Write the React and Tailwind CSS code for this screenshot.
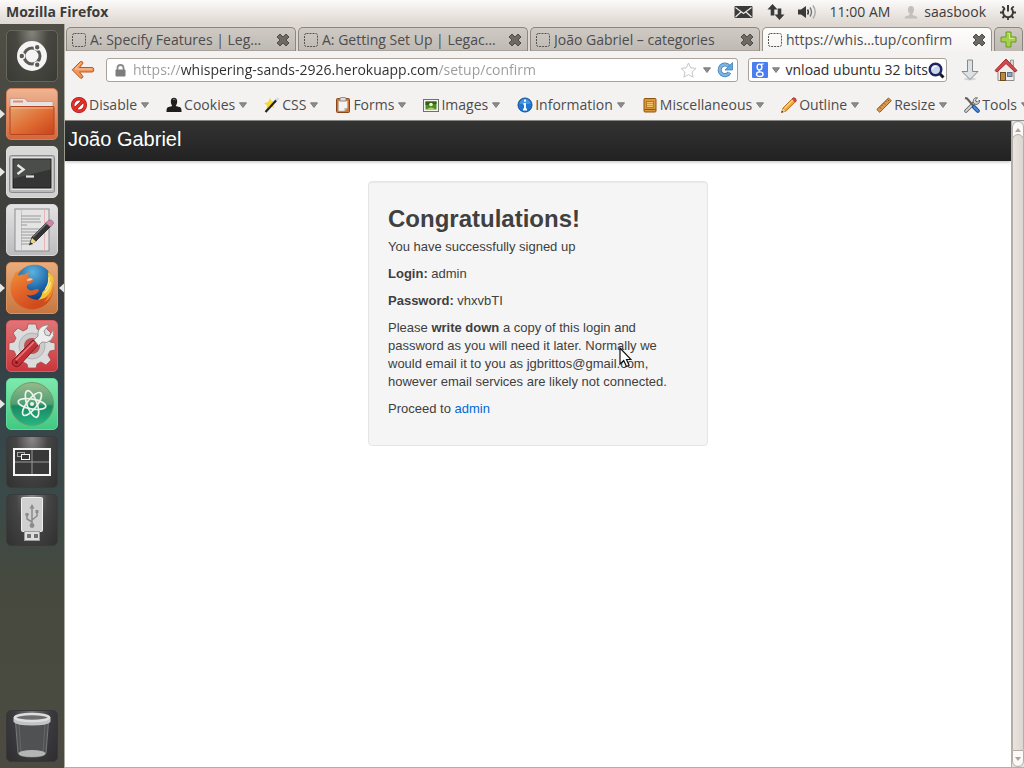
import React from "react";

const UI = "font-['Open_Sans','Noto_Sans',sans-serif]";

/* ---------- top panel ---------- */

function TopPanel() {
  return (
    <header className="flex h-6 shrink-0 items-center justify-between bg-linear-to-b from-[#fbfaf9] to-[#dfd8d2] pr-2 pl-[6px] text-[14px] leading-5 text-[#3c3c3c]">
      <h1 className="font-bold">Mozilla Firefox</h1>
      <div className="flex items-center">
        <button aria-label="Messages" className="mr-[14px]">
          <svg width="19" height="14" viewBox="0 0 19 14">
            <rect x="0.5" y="1" width="18" height="12" rx="1" fill="#3a3a3a" />
            <path d="M1.5 2.5 9.5 8.5 17.500 2.500M1.500 12 7 7M17.500 12 12 7" fill="none" stroke="#eeebe8" strokeWidth="1.200" />
          </svg>
        </button>
        <button aria-label="Network" className="mr-3">
          <svg width="18" height="16" viewBox="0 0 18 16" fill="#3a3a3a">
            <path d="M5.500 0 10.500 5.500H7.300v6H3.700v-6H.5z" />
            <path d="M12.500 16 7.500 10.500h3.200V4.500h3.600v6h3.200z" />
          </svg>
        </button>
        <button aria-label="Volume" className="mr-3">
          <svg width="21" height="16" viewBox="0 0 21 16" fill="none">
            <path d="M1 5.500h3L9 2v12L4 10.500H1z" fill="#3a3a3a" />
            <path d="M10.500 5.500q1.800 2.500 0 5" stroke="#3a3a3a" strokeWidth="1.500" />
            <path d="M13 3.500q3 4.500 0 9" stroke="#777" strokeWidth="1.400" />
            <path d="M16 1.500q4.500 6.500 0 13" stroke="#aaa" strokeWidth="1.400" />
          </svg>
        </button>
        <time className="mr-[14px]">11:00 AM</time>
        <button className="mr-[14px] flex items-center gap-[6px]">
          <svg width="14" height="14" viewBox="0 0 14 14" fill="#c4bfba">
            <path d="M4 4.500a3 3.500 0 0 1 6 0c0 2-.6 3.200-1.500 3.900V10l4 1.500q.8.4.8 1.500v.5H.7V13q0-1.100.8-1.500l4-1.500V8.400C4.600 7.700 4 6.500 4 4.500z" />
          </svg>
          saasbook
        </button>
        <button aria-label="Session">
          <svg width="16" height="16" viewBox="0 0 16 16" fill="none" stroke="#3a3a3a">
            <path d="M5 4.200a5 5 0 1 0 6 0" strokeWidth="2" />
            <path d="M8 1v6.500" strokeWidth="2" />
            <path d="M2.300 2.300 4.300 4.300M13.700 2.300 11.700 4.300M0 8.500H3M16 8.500H13M2.500 14 4.500 12M13.500 14 11.500 12M8 13v3" strokeWidth="1.800" />
          </svg>
        </button>
      </div>
    </header>
  );
}

/* ---------- launcher ---------- */

const DarkTile = "bg-[radial-gradient(ellipse_at_top,#8a8a8a_0%,#454545_45%,#303030_100%)] border-[#3a3b3b]";

const launchers = [
  {
    name: "Dash home",
    tile: "bg-[radial-gradient(ellipse_at_top,#85857c_0%,#484841_45%,#3a3a35_100%)] border-[#66665e]",
    art: (
      <>
        <circle cx="26" cy="26" r="15" fill="#f4f4f4" />
        <circle cx="26" cy="26" r="8" fill="none" stroke="#5b5a53" strokeWidth="3" />
        <g stroke="#f4f4f4" strokeWidth="1.400" fill="#5b5a53">
          <circle cx="15.800" cy="26" r="2.900" />
          <circle cx="31.200" cy="17.200" r="2.900" />
          <circle cx="31.200" cy="34.800" r="2.900" />
        </g>
      </>
    ),
  },
  {
    name: "Home folder",
    running: true,
    tile: "bg-linear-to-b from-[#efb493] to-[#d5673a] border-[#d77f55]",
    art: (
      <>
        <defs>
          <linearGradient id="folder" x1="0" y1="0" x2="1" y2="1">
            <stop offset="0" stopColor="#e0a56e" />
            <stop offset="0.500" stopColor="#e06f35" />
            <stop offset="1" stopColor="#c9431b" />
          </linearGradient>
        </defs>
        <path d="M4 10.500h14q2 0 3 3h26v12H4z" fill="#e4e4e4" stroke="#b98e78" strokeWidth="0.700" />
        <path d="M7 13.500h10" stroke="#e08d64" strokeWidth="2" />
        <rect x="4" y="18.500" width="44" height="28" rx="1" fill="url(#folder)" stroke="#b5451f" />
        <path d="M5 20h42" stroke="#f0b58f" />
      </>
    ),
  },
  {
    name: "Terminal",
    running: true,
    tile: "bg-linear-to-b from-[#d9d9d9] to-[#d0d0d0] border-[#dedede]",
    art: (
      <>
        <rect x="3.500" y="9.500" width="45" height="37" rx="2" fill="#b9b9b9" stroke="#8c8c8c" />
        <rect x="5.500" y="11" width="41" height="33" fill="#e3e3e3" />
        <rect x="7" y="13" width="38" height="29" fill="#343534" stroke="#1c1c1c" />
        <path d="M7.500 13.500h37v10l-37 9z" fill="#4b4d4b" />
        <path d="m11.500 19 6 4.500-6 4.500" fill="none" stroke="#e5e5e5" strokeWidth="2.400" />
        <path d="M20 30.500h8" stroke="#e5e5e5" strokeWidth="2.200" />
      </>
    ),
  },
  {
    name: "Text editor",
    tile: "bg-linear-to-b from-[#e3e3e3] to-[#bcbcbf] border-[#d8d8d9]",
    art: (
      <>
        <rect x="9" y="5" width="34" height="42" fill="#e4e4e4" stroke="#8d8d8d" />
        <path d="M15.500 5v42M38.500 5v42" stroke="#e8a9a9" strokeWidth="0.800" />
        <path d="M15 12h20M15 15h19M15 18h20M15 21h6M15 25h20M15 28h17M15 31h19M15 34h14M15 37h16M15 40h12" stroke="#999" strokeWidth="1.100" />
        <path d="M23.500 41 26 33 41 18 45 22 30 37z" fill="#333" stroke="#1f1f1f" strokeWidth="0.800" />
        <path d="M27 33 41.500 18.500" stroke="#777" strokeWidth="1.400" />
        <path d="M23.500 41 26 34 30 37.500z" fill="#ead98a" />
        <path d="m23.500 41 1-3 2 1.800z" fill="#222" />
        <path d="M39.500 19 43 16q4-.5 4.500 3.500L44.500 23z" fill="#cd86a8" stroke="#8e5572" strokeWidth="0.600" />
      </>
    ),
  },
  {
    name: "Firefox",
    running: true,
    active: true,
    tile: "bg-linear-to-b from-[#e9ac7c] to-[#c8763e] border-[#d9935f]",
    art: (
      <>
        <defs>
          <radialGradient id="globe" cx="0.450" cy="0.200" r="0.800">
            <stop offset="0" stopColor="#5cb3de" />
            <stop offset="0.600" stopColor="#1f64a6" />
            <stop offset="1" stopColor="#0d3470" />
          </radialGradient>
          <linearGradient id="fox" x1="0" y1="0" x2="0.600" y2="1">
            <stop offset="0" stopColor="#ee9436" />
            <stop offset="0.500" stopColor="#e4672a" />
            <stop offset="1" stopColor="#cf4a1e" />
          </linearGradient>
        </defs>
        <circle cx="26" cy="26" r="21.500" fill="url(#fox)" />
        <circle cx="28.500" cy="21" r="18.300" fill="url(#globe)" />
        <path d="M42.500 9q-1 4 0 7 .5 5-2 9-2 3-4 5-1 6-6 9 6 1 10-3 6-5 7-12 1-8-2-11-2-2-3-4z" fill="#f3c437" />
        <path d="M46.500 17q1.500 9-4 15-5 6-12 8 9 2 14-5 5-8 2-18z" fill="#ec8a2c" />
        <path d="M43 15q0 8-3.500 12M44.500 20q-1 7-6 11" fill="none" stroke="#fbeb92" strokeWidth="1.400" />
        <path d="M7.500 16q0-4 3-7 0 3 2 4.500 3-1.500 6-1 2-2 5-2.500-2 3-1 5 2 2 5 2.500-1 3.500-6 5-2 3 1 5 3 2 6 0 3-1 4.500.5-1 3.500-6 5-4 1-7-.5 5 6 13 5 6-1 9-3.500-4 10-16 11Q10 45 5.500 31 4 23 7.500 16z" fill="url(#fox)" />
        <path d="M21 17.500q3-2 6-.500-2 2-6 2z" fill="#f2c9b4" />
      </>
    ),
  },
  {
    name: "System settings",
    tile: "bg-linear-to-b from-[#e07477] to-[#c9363d] border-[#dc5c61]",
    art: (
      <>
        <path d="M22 4h8l1 5 4 2 5-3 5 5-3 5 2 4 5 1v7l-5 1-2 4 3 5-5 5-5-3-4 2-1 4h-8l-1-4-4-2-5 3-5-5 3-5-2-4-5-1v-7l5-1 2-4-3-5 5-5 5 3 4-2z" fill="#dcdcdc" stroke="#a94b4e" strokeWidth="0.800" />
        <circle cx="26" cy="26" r="13" fill="#cbcbcb" stroke="#b4b4b4" />
        <circle cx="26" cy="26" r="8" fill="#bf5156" />
        <path d="M7 40 27 20l5 5L13 46q-3 2-6-1-2-2 0-5z" fill="#c52f35" stroke="#801a1f" />
        <path d="M10 40 28 22" stroke="#e97c80" strokeWidth="1.600" />
        <path d="m28 20 4-4q-1-7 5-10 3-1.500 6-1l-5 6 1.500 4 4 1 3.500-6q2 6-2 10-4 4-9 2l-3.500 3.500z" fill="#ededed" stroke="#8d8d8d" strokeWidth="0.900" />
        <circle cx="10.500" cy="42.500" r="1.300" fill="#6d1317" />
      </>
    ),
  },
  {
    name: "Atom",
    running: true,
    tile: "bg-linear-to-b from-[#7fe8ae] to-[#40c983] border-[#5ddd98]",
    art: (
      <>
        <defs>
          <linearGradient id="atom" x1="0" y1="0" x2="0" y2="1">
            <stop offset="0" stopColor="#98b98b" />
            <stop offset="0.500" stopColor="#4f9f72" />
            <stop offset="0.550" stopColor="#178a62" />
            <stop offset="1" stopColor="#27b583" />
          </linearGradient>
        </defs>
        <circle cx="26" cy="26" r="21.500" fill="url(#atom)" stroke="#6d9d62" />
        <g fill="none" stroke="#ecf2ec" strokeWidth="1.700">
          <ellipse cx="26" cy="26" rx="14" ry="5" transform="rotate(10 26 26)" />
          <ellipse cx="26" cy="26" rx="14" ry="5" transform="rotate(70 26 26)" />
          <ellipse cx="26" cy="26" rx="14" ry="5" transform="rotate(128 26 26)" />
        </g>
        <circle cx="26" cy="26" r="2" fill="#ecf2ec" />
      </>
    ),
  },
  {
    name: "Workspace switcher",
    tile: DarkTile,
    art: (
      <>
        <rect x="8" y="13" width="36" height="26" fill="#383838" stroke="#f5f5f5" strokeWidth="2" />
        <path d="M26 14v24M9 26h34" stroke="#9a9a9a" />
        <rect x="11.500" y="16.500" width="7" height="4" fill="none" stroke="#a5a5a5" />
        <rect x="15.500" y="18.500" width="8" height="5" fill="#383838" stroke="#f5f5f5" />
      </>
    ),
  },
  {
    name: "USB drive",
    tile: DarkTile,
    art: (
      <>
        <rect x="15.500" y="3.500" width="21" height="34" rx="1" fill="#d0d0d0" stroke="#efefef" />
        <rect x="18.500" y="37.500" width="15" height="9" fill="#dedede" stroke="#9c9c9c" />
        <path d="M21 40h4v4h-4zM28 40h4v4h-4z" fill="#717171" />
        <g stroke="#8b8b8b" strokeWidth="1.500" fill="none">
          <path d="M26 14v18M26 28l-5-3v-4M26 26l5-4v-4" />
        </g>
        <path d="m26 10 2.500 4.500h-5zM29.500 16h3v3h-3z" fill="#8b8b8b" />
        <circle cx="21" cy="20.500" r="1.800" fill="#8b8b8b" />
        <circle cx="26" cy="31.500" r="2.400" fill="#8b8b8b" />
      </>
    ),
  },
];

const trash = {
  name: "Trash",
  tile: "bg-[radial-gradient(ellipse_at_top,#77777a_0%,#3c3c40_50%,#2e2e31_100%)] border-[#38383a]",
  art: (
    <>
      <path d="M9.500 12 12 43q1 4 14 4t14-4l2.500-31z" fill="#505152" stroke="#858585" strokeWidth="0.800" />
      <path d="M13 15 15 42M39 15 37 42" stroke="#666" />
      <ellipse cx="26" cy="43.500" rx="13.500" ry="3.500" fill="#b4b6b4" />
      <path d="M7.500 7v5q3 3.500 18.500 3.500T44.500 12V7z" fill="#c2c3c2" />
      <ellipse cx="26" cy="7.500" rx="17" ry="3.500" fill="#6d6d6d" stroke="#dedede" strokeWidth="2.600" />
    </>
  ),
};

function LauncherItem({ item }) {
  return (
    <div className="relative flex w-full justify-center">
      {item.running && (
        <svg className="absolute top-[21px] left-0" width="5" height="10" viewBox="0 0 5 10">
          <path d="M0 0.500 5 5 0 9.500z" fill="#e6e6e6" />
        </svg>
      )}
      <button aria-label={item.name} className={"size-[52px] rounded-[5px] border " + item.tile}>
        <svg className="-m-px" width="52" height="52" viewBox="0 0 52 52">
          {item.art}
        </svg>
      </button>
      {item.active && (
        <svg className="absolute top-[21px] right-0" width="5" height="10" viewBox="0 0 5 10">
          <path d="M5 0.500 0 5 5 9.500z" fill="#e6e6e6" />
        </svg>
      )}
    </div>
  );
}

function Launcher() {
  return (
    <nav
      aria-label="Launcher"
      className="flex w-[65px] shrink-0 flex-col gap-[6px] border-r border-[#aaa99f] bg-[linear-gradient(#504f45_0%,#3f3f3c_25%,#3a3c3d_38%,#34444a_50%,#3b4a47_64%,#47493f_76%,#4b4b41_100%)] pt-[6px] pb-[6px]"
    >
      {launchers.map((item) => (
        <LauncherItem key={item.name} item={item} />
      ))}
      <div className="mt-auto">
        <LauncherItem item={trash} />
      </div>
    </nav>
  );
}

/* ---------- tabs ---------- */

const tabs = [
  { title: "A: Specify Features | Leg…" },
  { title: "A: Getting Set Up | Legac…" },
  { title: "João Gabriel – categories" },
  { title: "https://whis…tup/confirm", selected: true },
];

function TabStrip() {
  return (
    <div className="flex h-[27px] items-end bg-[#dfd8d2] pt-[3px] pr-px pl-px">
      <div role="tablist" className="flex h-full min-w-0 flex-1 gap-[2px]">
        {tabs.map((tab) => (
          <div
            key={tab.title}
            className={
              "flex min-w-0 flex-1 items-center rounded-t-[5px] border border-b-0 px-[5px] " +
              (tab.selected
                ? "border-[#98918a] bg-linear-to-b from-[#fdfdfc] to-[#f6f4f3]"
                : "border-[#8d867f] bg-linear-to-b from-[#d0cac4] to-[#bfb9b3] shadow-[inset_0_-1px_0_#a8a19a]")
            }
          >
            <button role="tab" aria-selected={!!tab.selected} className="flex min-w-0 flex-1 items-center gap-1">
              <svg className="shrink-0" width="14" height="14" viewBox="0 0 14 14">
                <rect x="0.500" y="0.500" width="13" height="13" rx="2" fill="none" stroke="#55524f" strokeDasharray="2 1" />
              </svg>
              <span className="truncate text-[14px] leading-5 text-[#4c4c4c]">{tab.title}</span>
            </button>
            <button aria-label="Close tab" className="ml-1 shrink-0">
              <svg width="14" height="14" viewBox="0 0 14 14">
                <path d="M4 1 7 4l3-3 3 3-3 3 3 3-3 3-3-3-3 3-3-3 3-3-3-3z" fill="#6d6a66" stroke="#4e4b48" />
              </svg>
            </button>
          </div>
        ))}
      </div>
      <button
        aria-label="New tab"
        className="ml-[2px] flex h-full w-[29px] items-center justify-center rounded-t-[5px] border border-b-0 border-[#8d867f] bg-linear-to-b from-[#d0cac4] to-[#bfb9b3]"
      >
        <svg width="17" height="17" viewBox="0 0 17 17">
          <path d="M6 1h5v5h5v5h-5v5H6v-5H1V6h5z" fill="#a5d04c" stroke="#6a9a1f" />
          <path d="M7.500 2.500h2v5h5" fill="none" stroke="#d2ec96" />
        </svg>
      </button>
    </div>
  );
}

/* ---------- navigation bar ---------- */

function Caret() {
  return (
    <svg className="shrink-0" width="8" height="6" viewBox="0 0 8 6">
      <path d="M0.500 0.800h7L4 5.500z" fill="#8f8f8f" stroke="#6b6b6b" strokeWidth="0.800" />
    </svg>
  );
}

function NavBar() {
  return (
    <div className="flex h-[38px] items-center pr-[6px] pl-[6px]">
      <button aria-label="Back" className="mr-[11px]">
        <svg width="24" height="20" viewBox="0 0 24 20">
          <path d="M9.500 1.500q2.200-.5 2.500 1.700L8.500 7.500H21q1.800 0 1.800 2.300T21 12H8.500l3.500 4.500q-.3 2.200-2.500 1.700L1.200 9.800z" fill="#f0965a" stroke="#b85a22" />
          <path d="M9.500 3.500 4 9h17" fill="none" stroke="#f9c9a3" />
        </svg>
      </button>
      <div className="flex h-6 min-w-0 flex-1 items-center rounded-[3px] border border-[#aaa29a] bg-white pr-1 pl-2">
        <svg className="mr-[7px] shrink-0" width="11" height="13" viewBox="0 0 11 13">
          <path d="M2.500 6V4a3 3 0 0 1 6 0v2" fill="none" stroke="#8a8a8a" strokeWidth="1.800" />
          <rect x="0.500" y="5.500" width="10" height="7" rx="1" fill="#7d7d7d" />
        </svg>
        <input
          aria-label="Address"
          defaultValue="https://whispering-sands-2926.herokuapp.com/setup/confirm"
          className="min-w-0 flex-1 bg-[linear-gradient(90deg,#9a9a9a_48px,#2e2e2e_48px,#2e2e2e_305px,#9a9a9a_305px)] bg-clip-text text-[14px] leading-5 text-transparent caret-black outline-none"
        />
        <button aria-label="Bookmark this page" className="mr-[6px]">
          <svg width="17" height="16" viewBox="0 0 17 16">
            <path d="m8.500 1 2.200 4.800 5.300.6-3.900 3.600 1 5.200-4.600-2.600-4.600 2.600 1-5.200L1 6.400l5.300-.6z" fill="#fdfdfd" stroke="#c6c6c6" />
          </svg>
        </button>
        <button aria-label="History" className="mr-[6px]">
          <Caret />
        </button>
        <button aria-label="Reload">
          <svg width="16" height="16" viewBox="0 0 16 16">
            <path d="M12.500 10.500A5.300 5.300 0 1 1 12 4.500" fill="none" stroke="#4383bd" strokeWidth="4" />
            <path d="M12.500 10.500A5.300 5.300 0 1 1 12 4.500" fill="none" stroke="#7fb4df" strokeWidth="2.400" />
            <path d="M15.500 0.500v7.500H8z" fill="#6ba5d6" stroke="#4383bd" strokeWidth="0.800" />
          </svg>
        </button>
      </div>
      <div className="ml-[10px] flex h-6 w-[199px] shrink-0 items-center rounded-[3px] border border-[#aaa29a] bg-white pr-px pl-[3px]">
        <button aria-label="Search engine" className="flex shrink-0 items-center gap-1">
          <svg width="16" height="16" viewBox="0 0 16 16">
            <rect width="16" height="16" rx="1" fill="#4a7df0" />
            <ellipse cx="7.500" cy="5" rx="2.400" ry="2.900" fill="none" stroke="#fff" strokeWidth="1.400" />
            <path d="M9 2.300 11.500 1.800M7.500 8q-1.300 1 .5 1.900" fill="none" stroke="#fff" strokeWidth="1.200" />
            <ellipse cx="7.800" cy="12.200" rx="3.300" ry="2.300" fill="none" stroke="#fff" strokeWidth="1.400" />
          </svg>
          <Caret />
        </button>
        <input
          aria-label="Search"
          defaultValue="vnload ubuntu 32 bits"
          className="ml-1 min-w-0 flex-1 text-right text-[14px] leading-5 text-[#2e2e2e] outline-none"
        />
        <button aria-label="Go" className="shrink-0">
          <svg width="17" height="17" viewBox="0 0 17 17">
            <path d="m11 11 4.500 4.500" stroke="#1b1b1b" strokeWidth="3" />
            <circle cx="7.500" cy="7.500" r="5.800" fill="#c9d6ee" stroke="#1f2462" strokeWidth="2.400" />
            <path d="M4.500 7a3.500 3.500 0 0 1 4-2.500" fill="none" stroke="#fff" strokeWidth="1.400" />
          </svg>
        </button>
      </div>
      <button aria-label="Downloads" className="ml-[14px]">
        <svg width="18" height="22" viewBox="0 0 18 22">
          <ellipse cx="9" cy="20" rx="6" ry="1.500" fill="#d6d4d2" />
          <path d="M6.500 1h5v11.500H17L9 20.500 1 12.500h5.500z" fill="#dde1e3" stroke="#84898c" />
        </svg>
      </button>
      <button aria-label="Home" className="ml-[15px]">
        <svg width="24" height="24" viewBox="0 0 24 24">
          <path d="M4 11v11.500h16V11l-8-8z" fill="#efeeec" stroke="#8f8c88" />
          <path d="M16.500 2h3v6h-3z" fill="#d8d6d3" stroke="#8f8c88" strokeWidth="0.800" />
          <path d="M12 1 1 12.500 3 14l9-8.500 9 8.500 2-1.500z" fill="#d6484b" stroke="#a12a2d" />
          <rect x="6.500" y="14.500" width="5" height="8" fill="#b98746" stroke="#6e4a1b" />
          <rect x="13.500" y="14.500" width="4.500" height="4" fill="#8ba6c4" stroke="#65717f" />
        </svg>
      </button>
    </div>
  );
}

/* ---------- developer toolbar ---------- */

const tools = [
  {
    label: "Disable",
    art: (
      <>
        <circle cx="8" cy="8" r="6.300" fill="#fff" stroke="#a01010" strokeWidth="3.400" />
        <path d="M3.800 12.200 12.200 3.800" stroke="#a01010" strokeWidth="3.400" />
        <circle cx="8" cy="8" r="6.300" fill="none" stroke="#e83026" strokeWidth="2.200" />
        <path d="M3.800 12.200 12.200 3.800" stroke="#e83026" strokeWidth="2.200" />
      </>
    ),
  },
  {
    label: "Cookies",
    art: (
      <>
        <path d="M4.800 4.500a3.200 3.800 0 0 1 6.400 0c0 2-1 3.500-1.500 4.500l4.500 1.200q1.300.8 1.300 3.300V15H.5v-1.500q0-2.500 1.300-3.300L6.300 9c-.5-1-1.500-2.500-1.500-4.500z" fill="#1d1d1d" />
        <path d="M7 2.500q1.500-.8 2.500.5" stroke="#888" fill="none" />
      </>
    ),
  },
  {
    label: "CSS",
    art: (
      <>
        <path d="m6 1 1.500 3L11 4.500 8.500 7l2 4-4-1.500L2.500 13 3 8.500 0 6l4-.7z" fill="#f8d733" />
        <path d="M1.500 15 12.500 3" stroke="#222" strokeWidth="2.200" />
        <path d="M12 3.500 14.500 1" stroke="#d9d9d9" strokeWidth="2.400" />
        <path d="M4 10.500 5 9.500" stroke="#bbb" />
      </>
    ),
  },
  {
    label: "Forms",
    art: (
      <>
        <rect x="1.500" y="1.500" width="13" height="14" rx="1" fill="#c8763a" stroke="#8d4515" />
        <path d="M3.500 4h9v7l-3 3h-6z" fill="#f5f3f0" stroke="#b9aea4" strokeWidth="0.600" />
        <path d="M12.500 11h-3v3z" fill="#b8b0a8" />
        <rect x="5" y="0.500" width="6" height="3.500" rx="1" fill="#ddd" stroke="#7d7d7d" strokeWidth="0.800" />
      </>
    ),
  },
  {
    label: "Images",
    art: (
      <>
        <rect x="0.500" y="2.500" width="15" height="12" fill="#f5f5f3" stroke="#6f6f6b" />
        <rect x="2.500" y="4.500" width="11" height="8" fill="#4d8a24" />
        <path d="M2.500 4.500h11v2.500l-11 1z" fill="#2f6212" />
        <circle cx="8" cy="7.500" r="1.800" fill="#f4f0d8" />
        <path d="M3.500 12.500q4.500-4 9 0z" fill="#a9d464" />
      </>
    ),
  },
  {
    label: "Information",
    art: (
      <>
        <circle cx="8" cy="8" r="7" fill="#2177cf" stroke="#0d4f9c" />
        <path d="M2.500 7a5.500 5 0 0 1 11 0z" fill="#4795de" />
        <path d="M8 2.500v2.300M6.500 7H8v5M6 12.500h4" fill="none" stroke="#fff" strokeWidth="1.900" />
      </>
    ),
  },
  {
    label: "Miscellaneous",
    art: (
      <>
        <rect x="2" y="1.500" width="12" height="13.500" rx="1" fill="#d9983b" stroke="#8f5410" />
        <path d="M2.500 12.500h11" stroke="#8f5410" />
        <rect x="4.500" y="4.500" width="7" height="6" fill="#f2c36c" stroke="#a96b1d" strokeWidth="0.800" />
        <path d="M5 6.500h6M5 8.500h6" stroke="#c88a36" strokeWidth="0.800" />
      </>
    ),
  },
  {
    label: "Outline",
    art: (
      <>
        <path d="M0.500 15.500 2 11 11.500 1.500l3.200 3L5 14z" fill="#f3a42c" stroke="#a8590e" strokeWidth="0.800" />
        <path d="M11 2 12.500 .6q2.500.2 3 3L14.200 5z" fill="#e04545" stroke="#9b2020" strokeWidth="0.600" />
        <path d="M3.500 11.500 12 3" stroke="#fbd684" strokeWidth="1.300" />
        <path d="M0.500 15.500 1.800 11.800 4.500 14z" fill="#ecd9b2" />
        <path d="m.3 15.700.8-2 1.200 1z" fill="#222" />
      </>
    ),
  },
  {
    label: "Resize",
    art: (
      <>
        <path d="M0.800 12.500 12.500 1 15.300 3.800 3.800 15.300z" fill="#d99a4e" stroke="#91571a" />
        <path d="M3.500 10 5 11.500M5.500 8 6.500 9M7.500 6 9 7.500M9.500 4 10.500 5M11.500 2.500 13 4" stroke="#7b4512" strokeWidth="0.900" />
      </>
    ),
  },
  {
    label: "Tools",
    art: (
      <>
        <path d="M2 14 11 5" stroke="#555" strokeWidth="3.400" strokeLinecap="round" />
        <path d="M2 14 11 5" stroke="#d4d4d4" strokeWidth="1.800" strokeLinecap="round" />
        <path d="M13.500 .8 11.500 3l.5 1.500 1.500.5 2-2q.5 3-1.500 4t-4-.3Q8.500 5 9.500 2.500t4-1.700z" fill="#d9d9d9" stroke="#555" strokeWidth="0.800" />
        <path d="M1 1 3 1.500 9.500 9" fill="none" stroke="#5f5f5f" strokeWidth="2" />
        <path d="m10 10 3.800 3.800" stroke="#1d4d94" strokeWidth="4" strokeLinecap="round" />
        <path d="m10 10 3.800 3.800" stroke="#4d8bdb" strokeWidth="2" strokeLinecap="round" />
      </>
    ),
  },
];

function DevToolbar() {
  return (
    <div role="toolbar" className="flex h-8 items-center gap-[17px] overflow-hidden border-b border-[#8f8b86] pl-[6px]">
      {tools.map((tool) => (
        <button key={tool.label} className="flex shrink-0 items-center text-[14px] leading-5 text-[#4c4c4c]">
          <svg className="mr-[2px]" width="16" height="16" viewBox="0 0 16 16">
            {tool.art}
          </svg>
          <span className="mr-1">{tool.label}</span>
          <Caret />
        </button>
      ))}
    </div>
  );
}

/* ---------- web page ---------- */

function Pointer() {
  return (
    <svg className="absolute top-[165px] left-[250px]" width="13" height="21" viewBox="0 0 13 21">
      <path d="M1 1v16l3.700-3.500L7.500 19.500l2.600-1.200-2.600-5.800H12z" fill="#fff" stroke="#111" strokeWidth="1.200" />
    </svg>
  );
}

function Page() {
  return (
    <div className="min-w-0 flex-1 bg-white font-['Liberation_Sans',Arial,sans-serif]">
      <div className="flex h-10 items-center bg-linear-to-b from-[#333333] to-[#222222] px-[3px] pb-1 text-[20px] leading-5 text-white shadow-[0_1px_3px_rgba(0,0,0,0.25)]">
        <a href="#home">João Gabriel</a>
      </div>
      <main className="relative mx-auto mt-5 w-[340px] rounded-[4px] border border-[#e5e5e5] bg-[#f5f5f5] px-[19px] pt-[19px] pb-[18px] text-[13px] leading-[18px] text-[#404040] shadow-[inset_0_1px_1px_rgba(0,0,0,0.05)]">
        <h2 className="mb-px text-[24px] leading-9 font-bold">Congratulations!</h2>
        <p className="mb-[9px]">You have successfully signed up</p>
        <p className="mb-[9px]">
          <strong>Login:</strong> admin
        </p>
        <p className="mb-[9px]">
          <strong>Password:</strong> vhxvbTI
        </p>
        <p className="mb-[9px]">
          Please <strong>write down</strong> a copy of this login and password as you will need it later. Normally we would email it to you as
          jgbrittos@gmail.com, however email services are likely not connected.
        </p>
        <p className="mb-[9px]">
          Proceed to{" "}
          <a href="#admin" className="text-[#0069d6]">
            admin
          </a>
        </p>
        <Pointer />
      </main>
    </div>
  );
}

function ScrollBar() {
  return (
    <div className="flex w-[13px] shrink-0 flex-col border-l border-[#b5aea6] bg-[#e6e1dc]">
      <button aria-label="Scroll up" className="flex h-[17px] items-center justify-center rounded-t-full border border-[#b5aea6] bg-[#faf9f8]">
        <svg width="6" height="4" viewBox="0 0 6 4">
          <path d="M0 4 3 0l3 4z" fill="#aaa49d" />
        </svg>
      </button>
      <div className="-my-1 flex-1 rounded-full border border-[#b5aea6] bg-linear-to-r from-[#e8e4e0] to-[#dcd6d1]" />
      <button aria-label="Scroll down" className="flex h-[17px] items-center justify-center rounded-b-full border border-[#b5aea6] bg-[#faf9f8]">
        <svg width="6" height="4" viewBox="0 0 6 4">
          <path d="M0 0h6L3 4z" fill="#aaa49d" />
        </svg>
      </button>
    </div>
  );
}

export default function App() {
  return (
    <div className={"flex min-h-screen flex-col bg-[#f4f2f1] " + UI}>
      <TopPanel />
      <div className="flex flex-1">
        <Launcher />
        <div className="flex min-w-0 flex-1 flex-col">
          <TabStrip />
          <NavBar />
          <DevToolbar />
          <div className="flex flex-1 border-b border-[#b5aea6]">
            <Page />
            <ScrollBar />
          </div>
        </div>
      </div>
    </div>
  );
}
